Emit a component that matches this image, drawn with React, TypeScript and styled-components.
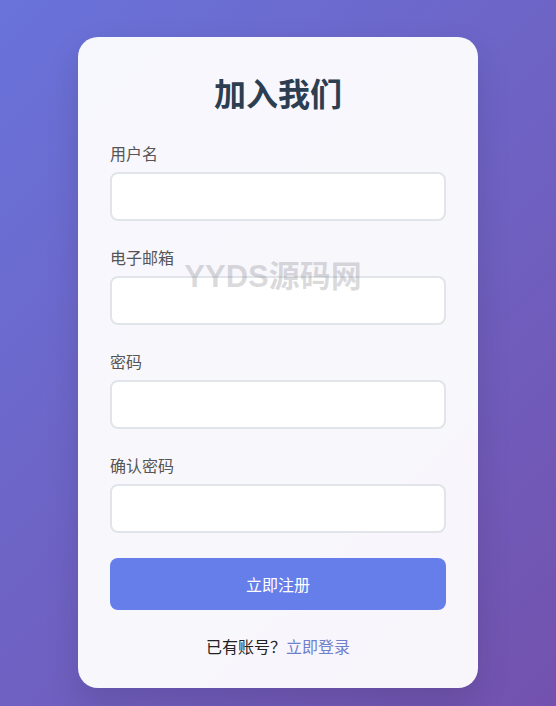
import React from 'react'
import styled, { createGlobalStyle } from 'styled-components'

const GlobalStyle = createGlobalStyle`
  * {
    box-sizing: border-box;
  }

  body {
    margin: 0;
    font-family: 'Noto Sans CJK SC', 'Noto Sans', sans-serif;
  }
`

const Page = styled.div`
  position: relative;
  min-height: 706px;
  padding-top: 37px;
  display: flex;
  justify-content: center;
  align-items: flex-start;
  background: linear-gradient(135deg, #6973da 0%, #7352ae 100%);
`

const Card = styled.form`
  width: 400px;
  padding: 37px 32px 31px;
  border-radius: 20px;
  background-color: rgba(255, 255, 255, 0.95);
  box-shadow: 0 15px 35px rgba(0, 0, 0, 0.12);
`

const Title = styled.h1`
  margin: 0 0 32px;
  font-size: 32px;
  font-weight: 700;
  line-height: 36px;
  text-align: center;
  color: #2c3e50;
`

const FieldGroup = styled.div`
  margin-bottom: 25px;
`

const Label = styled.label`
  display: block;
  margin-bottom: 8px;
  font-size: 16px;
  line-height: 22px;
  color: #555;
`

const Input = styled.input`
  display: block;
  width: 100%;
  height: 49px;
  padding: 0 14px;
  border: 2px solid #e1e5e9;
  border-radius: 8px;
  background-color: #fff;
  font-size: 16px;
  font-family: inherit;
  outline: none;
`

const SubmitButton = styled.button`
  display: block;
  width: 100%;
  height: 52px;
  border: none;
  border-radius: 8px;
  background-color: #667eea;
  color: #fff;
  font-size: 16px;
  font-family: inherit;
  cursor: pointer;
`

const Footer = styled.p`
  margin: 25px 0 0;
  font-size: 16px;
  line-height: 22px;
  text-align: center;
  color: #222;
`

const LoginLink = styled.a`
  color: #6f80cc;
  text-decoration: none;
`

const Watermark = styled.div`
  position: absolute;
  top: 259px;
  left: 0;
  right: 0;
  padding-right: 10px;
  text-align: center;
  font-family: 'Liberation Sans', 'Noto Sans CJK SC', sans-serif;
  font-size: 31px;
  font-weight: 700;
  line-height: 36px;
  color: rgba(90, 90, 100, 0.22);
  pointer-events: none;
`

const fields = [
  { id: 'username', label: '用户名', type: 'text' },
  { id: 'email', label: '电子邮箱', type: 'email' },
  { id: 'password', label: '密码', type: 'password' },
  { id: 'confirm', label: '确认密码', type: 'password' },
]

const App = () => {
  return (
    <Page>
      <GlobalStyle />
      <Card onSubmit={(e) => e.preventDefault()}>
        <Title>加入我们</Title>
        {fields.map((field) => (
          <FieldGroup key={field.id}>
            <Label htmlFor={field.id}>{field.label}</Label>
            <Input id={field.id} type={field.type} />
          </FieldGroup>
        ))}
        <SubmitButton type='submit'>立即注册</SubmitButton>
        <Footer>
          已有账号？<LoginLink href='#'>立即登录</LoginLink>
        </Footer>
      </Card>
      <Watermark>YYDS源码网</Watermark>
    </Page>
  )
}

export default App
